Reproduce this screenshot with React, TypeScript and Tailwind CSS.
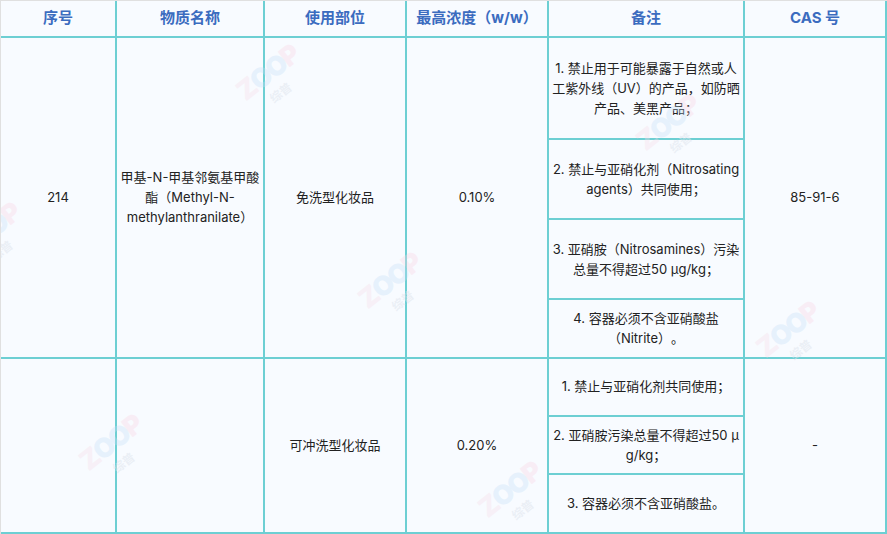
const fontStack = '[font-family:"Inter","Noto_Sans_CJK_SC",sans-serif]'

const th =
  'border-r-2 border-b-2 border-[#6dcfd3] text-center align-middle text-[15px] font-bold text-[#3b6cbf] [text-spacing-trim:space-all]'
const cell =
  'border-r-2 border-b-2 border-[#6dcfd3] text-center align-middle text-[13px] leading-[20px] text-[#222222] [text-spacing-trim:space-all]'
const td = `${cell} pb-[2px]`
const noteTd = `${cell} pb-0`

const watermarks = [
  'left-[237px] top-[50px]',
  'left-[637px] top-[100px]',
  'left-[-42px] top-[208px]',
  'left-[359px] top-[258px]',
  'left-[757px] top-[307px]',
  'left-[80px] top-[420px]',
  'left-[479px] top-[467px]'
]

function Watermark({ className }: { className: string }) {
  return (
    <div
      className={`pointer-events-none absolute h-[50px] w-[60px] select-none ${className}`}
    >
      <div className="absolute left-[-8px] top-[8px] flex w-[76px] -rotate-[38deg] justify-center text-[27px] leading-[28px] font-black tracking-[-2px] [font-family:'Inter',sans-serif]">
        <span className="text-[#f6dbe8]/35">Z</span>
        <span className="text-[#c4e0f7]/35">O</span>
        <span className="text-[#c4e0f7]/35">O</span>
        <span className="text-[#f8d5e3]/35">P</span>
      </div>
      <div className="absolute left-[31px] top-[35px] -rotate-[38deg] text-[12px] leading-[14px] font-bold text-[#dde3ec]/50">
        综普
      </div>
    </div>
  )
}

function Lines({ lines }: { lines: string[] }) {
  return (
    <>
      {lines.map((line, i) => (
        <div key={i} className="whitespace-nowrap">
          {line}
        </div>
      ))}
    </>
  )
}

export default function App() {
  return (
    <div
      className={`relative h-[534px] w-[887px] overflow-hidden border-t border-l border-[#e0e0e0] bg-[#f8fbff] ${fontStack}`}
    >
      <table className="w-[886px] table-fixed border-separate border-spacing-0">
        <colgroup>
          <col className="w-[116px]" />
          <col className="w-[148px]" />
          <col className="w-[142px]" />
          <col className="w-[142px]" />
          <col className="w-[196px]" />
          <col className="w-[142px]" />
        </colgroup>
        <thead>
          <tr className="h-[37px]">
            <th className={th}>序号</th>
            <th className={th}>物质名称</th>
            <th className={th}>使用部位</th>
            <th className={th}>最高浓度（w/w）</th>
            <th className={th}>备注</th>
            <th className={th}>CAS 号</th>
          </tr>
        </thead>
        <tbody>
          <tr className="h-[102px]">
            <td rowSpan={4} className={td}>
              214
            </td>
            <td rowSpan={4} className={td}>
              <Lines lines={['甲基-N-甲基邻氨基甲酸', '酯（Methyl-N-', 'methylanthranilate）']} />
            </td>
            <td rowSpan={4} className={td}>
              免洗型化妆品
            </td>
            <td rowSpan={4} className={td}>
              0.10%
            </td>
            <td className={noteTd}>
              <Lines
                lines={['1. 禁止用于可能暴露于自然或人', '工紫外线（UV）的产品，如防晒', '产品、美黑产品；']}
              />
            </td>
            <td rowSpan={4} className={td}>
              85-91-6
            </td>
          </tr>
          <tr className="h-[80px]">
            <td className={noteTd}>
              <Lines lines={['2. 禁止与亚硝化剂（Nitrosating', 'agents）共同使用；']} />
            </td>
          </tr>
          <tr className="h-[80px]">
            <td className={noteTd}>
              <Lines lines={['3. 亚硝胺（Nitrosamines）污染', '总量不得超过50 μg/kg；']} />
            </td>
          </tr>
          <tr className="h-[59px]">
            <td className={td}>
              <Lines lines={['4. 容器必须不含亚硝酸盐', '（Nitrite）。']} />
            </td>
          </tr>
          <tr className="h-[58px]">
            <td rowSpan={3} className={td}></td>
            <td rowSpan={3} className={td}></td>
            <td rowSpan={3} className={td}>
              可冲洗型化妆品
            </td>
            <td rowSpan={3} className={td}>
              0.20%
            </td>
            <td className={td}>1. 禁止与亚硝化剂共同使用；</td>
            <td rowSpan={3} className={td}>
              -
            </td>
          </tr>
          <tr className="h-[58px]">
            <td className={noteTd}>
              <Lines lines={['2. 亚硝胺污染总量不得超过50 μ', 'g/kg；']} />
            </td>
          </tr>
          <tr className="h-[59px]">
            <td className={td}>3. 容器必须不含亚硝酸盐。</td>
          </tr>
        </tbody>
      </table>
      {watermarks.map((pos) => (
        <Watermark key={pos} className={pos} />
      ))}
    </div>
  )
}
